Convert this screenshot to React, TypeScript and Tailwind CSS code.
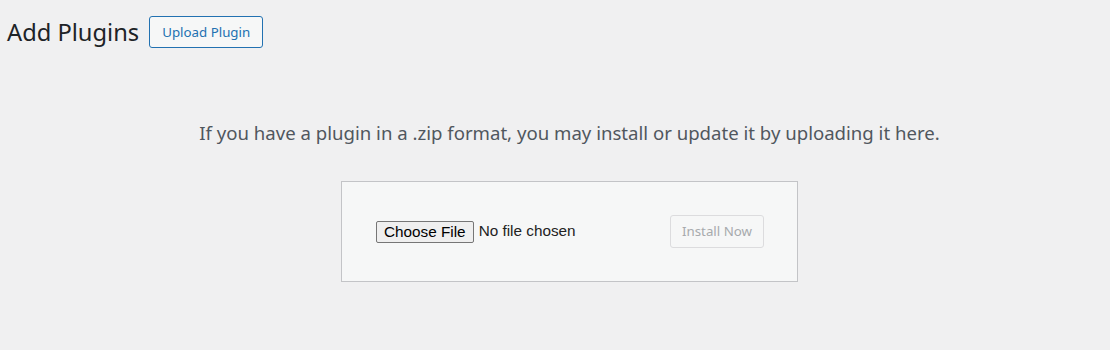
export default function App() {
  return (
    <div className="min-h-[350px] bg-[#f0f0f1] font-['Noto_Sans',sans-serif] text-[#1d2327]">
      <div className="flex items-center pl-[7px] pt-[16px]">
        <h1 className="text-[23.7px] leading-[32px] font-normal">Add Plugins</h1>
        <button className="ml-[10px] h-[32px] w-[114px] rounded-[3px] border border-[#2271b1] bg-[#f6f7f7] text-[13.3px] leading-[30px] text-[#2271b1]">
          Upload Plugin
        </button>
      </div>
      <div className="pl-[29px]">
        <p className="mt-[73px] text-center text-[18.6px] leading-[24px] text-[#50575e]">
          If you have a plugin in a .zip format, you may install or update it by uploading it here.
        </p>
        <div className="mx-auto mt-[36px] flex h-[101px] w-[457px] items-center justify-between border border-[#c3c4c7] bg-[#f6f7f7] pl-[34px] pr-[33px]">
          <label className="flex items-center font-['Liberation_Sans',Arial,sans-serif] text-[15.3px] text-black">
            <span className="flex h-[22px] items-center rounded-[2px] border border-[#767676] bg-[#efefef] px-[7px] leading-[20px]">
              Choose File
            </span>
            <span className="ml-[5px] text-[#222]">No file chosen</span>
          </label>
          <button
            disabled
            className="h-[33px] w-[94px] rounded-[3px] border border-[#dcdcde] bg-[#f6f7f7] text-[13.3px] leading-[31px] text-[#a7aaad]"
          >
            Install Now
          </button>
        </div>
      </div>
    </div>
  );
}
